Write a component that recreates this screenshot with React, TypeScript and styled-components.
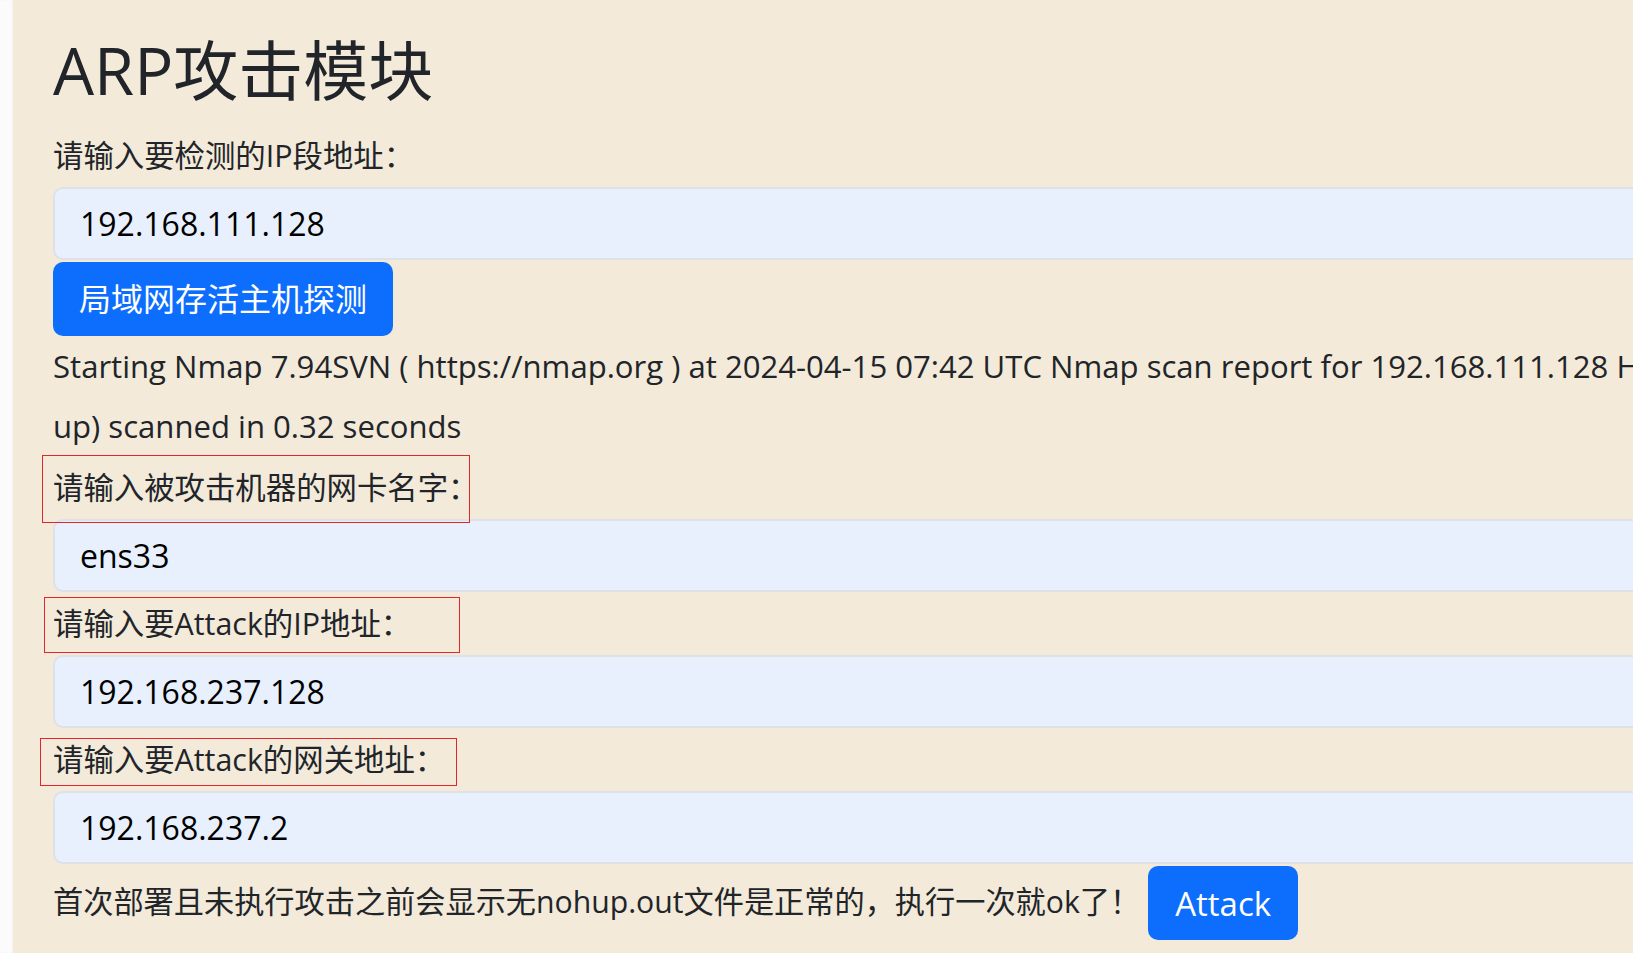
import React from "react";
import styled, { createGlobalStyle, css } from "styled-components";

const GlobalStyle = createGlobalStyle`
  html, body {
    margin: 0;
    padding: 0;
    overflow: hidden;
    background: #f3eada;
  }
  body {
    font-family: "Open Sans", "Noto Sans CJK SC", sans-serif;
    color: #212529;
  }
`;

const Page = styled.div`
  display: flex;
  width: 2400px;
  min-height: 100vh;
`;

const Gutter = styled.div`
  width: 13px;
  flex-shrink: 0;
  background: #fbfbfb;
  box-shadow: inset -1px 0 2px rgba(0, 0, 0, 0.04);
`;

const Panel = styled.main`
  flex: 1;
  display: flex;
  flex-direction: column;
  align-items: stretch;
  padding: 31px 0 0 40px;
  background: #f3eada;
`;

const Title = styled.h1`
  margin: 0 0 15px;
  font-size: 65px;
  font-weight: 400;
  line-height: 78px;
  color: #212529;
`;

type Mark = { top: number; left: number; width: number; height: number };

const Label = styled.label<{ $mark?: Mark }>`
  position: relative;
  display: block;
  margin: 10px 0 9px;
  font-size: 30.4px;
  line-height: 44px;
  color: #212529;

  ${(p) =>
    p.$mark &&
    css`
      &::after {
        content: "";
        position: absolute;
        top: ${p.$mark.top}px;
        left: ${p.$mark.left}px;
        width: ${p.$mark.width}px;
        height: ${p.$mark.height}px;
        border: 1px solid #e3252c;
        box-sizing: border-box;
        pointer-events: none;
        z-index: 2;
      }
    `}
`;

const Input = styled.input`
  display: block;
  box-sizing: border-box;
  width: 100%;
  height: 73px;
  margin: 0;
  padding: 0 25px;
  border: 2px solid #dee2e6;
  border-radius: 10px;
  background: #e8f0fe;
  color: #000;
  font-family: "Open Sans", "Noto Sans CJK SC", sans-serif;
  font-size: 32px;
  outline: none;
`;

const Button = styled.button`
  display: inline-flex;
  align-items: center;
  justify-content: center;
  box-sizing: border-box;
  height: 74px;
  padding: 0 26px;
  border: none;
  border-radius: 10px;
  background: #0d6efd;
  color: #fff;
  font-family: "Open Sans", "Noto Sans CJK SC", sans-serif;
  font-size: 32px;
  line-height: 1;
  cursor: pointer;
`;

const ScanButton = styled(Button)`
  align-self: flex-start;
  margin-top: 2px;
`;

const Output = styled.p`
  margin: 0;
  font-size: 31.1px;
  line-height: 60px;
  white-space: nowrap;
`;

const Footer = styled.div`
  display: flex;
  align-items: center;
  gap: 8px;
  margin-top: 2px;
`;

const Note = styled.span`
  font-size: 30.2px;
  line-height: 44px;
  margin-top: -3px;
`;

const AttackButton = styled(Button)`
  padding: 0 27px;
  font-size: 33px;
`;

export default function App() {
  return (
    <>
      <GlobalStyle />
      <Page>
        <Gutter />
        <Panel>
          <Title>ARP攻击模块</Title>

          <Label>请输入要检测的IP段地址：</Label>
          <Input defaultValue="192.168.111.128" />
          <ScanButton>局域网存活主机探测</ScanButton>

          <Output>
            Starting Nmap 7.94SVN ( https://nmap.org ) at 2024-04-15 07:42 UTC Nmap scan report for 192.168.111.128 Host is up (0.00043s latency). Nmap done: 1 IP address (1 host
            <br />
            up) scanned in 0.32 seconds
          </Output>

          <Label $mark={{ top: -11, left: -11, width: 428, height: 68 }}>请输入被攻击机器的网卡名字：</Label>
          <Input defaultValue="ens33" />

          <Label $mark={{ top: -5, left: -9, width: 416, height: 56 }}>请输入要Attack的IP地址：</Label>
          <Input defaultValue="192.168.237.128" />

          <Label $mark={{ top: 0, left: -13, width: 417, height: 48 }}>请输入要Attack的网关地址：</Label>
          <Input defaultValue="192.168.237.2" />

          <Footer>
            <Note>首次部署且未执行攻击之前会显示无nohup.out文件是正常的，执行一次就ok了！</Note>
            <AttackButton>Attack</AttackButton>
          </Footer>
        </Panel>
      </Page>
    </>
  );
}
